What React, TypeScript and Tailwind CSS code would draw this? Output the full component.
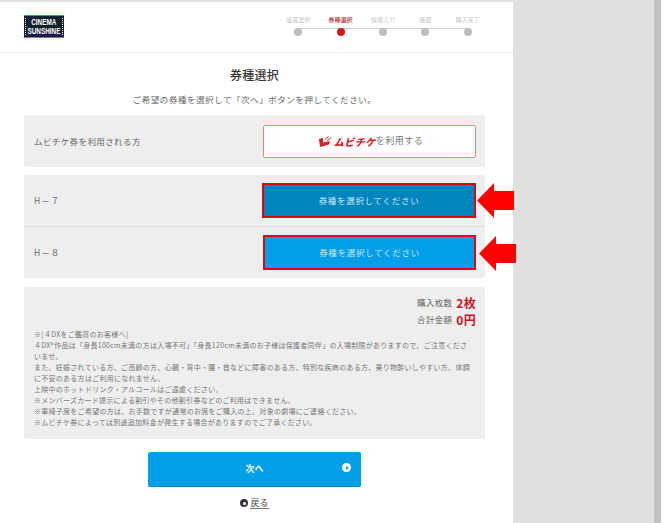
const font = { fontFamily: '"Noto Sans CJK JP", "Noto Sans", sans-serif' }

const steps = ['座席選択', '券種選択', '情報入力', '確認', '購入完了']

const notes = [
  '※[４DXをご鑑賞のお客様へ]',
  '４DX®作品は「身長100cm未満の方は入場不可」「身長120cm未満のお子様は保護者同伴」の入場制限がありますので、ご注意くださ',
  'いませ。',
  'また、妊娠されている方、ご高齢の方、心臓・背中・腰・首などに障害のある方、特別な疾病のある方、乗り物酔いしやすい方、体調',
  'に不安のある方はご利用になれません。',
  '上映中のホットドリンク・アルコールはご遠慮ください。',
  '※メンバーズカード提示による割引やその他割引券などのご利用はできません。',
  '※車椅子席をご希望の方は、お手数ですが通常のお席をご購入の上、対象の劇場にご連絡ください。',
  '※ムビチケ券によっては別途追加料金が発生する場合がありますのでご了承ください。',
]

function Logo() {
  return (
    <div className="relative flex h-[23px] w-[40px] flex-col items-center justify-center border-y border-[#1b9ad6] bg-[#10202e] font-['Liberation_Sans'] text-[8.5px] leading-[9px] font-bold text-white">
      <span className="scale-x-75">CINEMA</span>
      <span className="scale-x-75">SUNSHINE</span>
      <span className="absolute top-[2px] bottom-[2px] left-[1px] w-[1px] border-l border-dotted border-white" />
      <span className="absolute top-[2px] right-[1px] bottom-[2px] w-[1px] border-l border-dotted border-white" />
    </div>
  )
}

function Stepper() {
  return (
    <div className="flex w-[212px] justify-between">
      {steps.map((label, i) => (
        <div key={label} className="relative flex w-[42.5px] flex-col items-center">
          <span className={`text-[6px] leading-[9px] whitespace-nowrap ${i === 1 ? 'font-medium text-[#b03030]' : 'text-[#c4c4c4]'}`}>{label}</span>
          <span className={`relative z-10 mt-[4px] h-[8px] w-[8px] rounded-full ${i === 1 ? 'bg-[#cc1a1a]' : 'bg-[#bdbdbd]'}`} />
          {i < 4 && <span className="absolute top-[12.5px] left-1/2 h-[1px] w-[42.5px] bg-[#d0d0d0]" />}
        </div>
      ))}
    </div>
  )
}

function MubichikeMark() {
  return (
    <svg width="13" height="11" viewBox="0 0 13 11" className="mr-[2px]">
      <path d="M0 3 L4 2 L4 6.5 L11 5 L10 8.5 L1 11 Z" fill="#d9232a" />
      <path d="M6 3.5 L9.5 0.5 M8 4.5 L12.5 1.5" stroke="#d9232a" strokeWidth="1" fill="none" />
    </svg>
  )
}

function SelectButton({ dark, wide }: { dark?: boolean; wide?: boolean }) {
  return (
    <button className={`flex h-[35px] items-center justify-center border-2 border-[#e3000f] text-[8.5px] tracking-[0.7px] text-[#cfeaf8] ${wide ? 'w-[214px]' : 'w-[213px]'} ${dark ? 'bg-[#0085bd]' : 'bg-[#009fe8]'}`}>
      券種を選択してください
    </button>
  )
}

function Arrow() {
  return (
    <svg width="37" height="35" viewBox="0 0 37 35">
      <path d="M0 17.5 L17 0 L17 8 L37 8 L37 27 L17 27 L17 35 Z" fill="#ff0000" />
    </svg>
  )
}

export default function App() {
  return (
    <div className="flex h-[523px] w-[663px] overflow-hidden bg-[#e0e0de] text-[#333]" style={font}>
      <main className="relative h-[523px] w-[513px] bg-white">
        <div className="h-[2px] bg-[#e0e0de]" />
        <header className="flex h-[51px] items-start justify-between border-b border-[#f1f1f1] pt-[13px] pr-[24px] pl-[24px]">
          <Logo />
          <Stepper />
        </header>

        <div className="mr-[28px] ml-[24px]">
          <h1 className="mt-[13px] text-center text-[12px] leading-[18px] font-medium tracking-[0.3px] text-[#333]">券種選択</h1>
          <p className="mt-[9px] text-center text-[8.5px] leading-[12px] tracking-[0.55px] text-[#666]">ご希望の券種を選択して「次へ」ボタンを押してください。</p>

          <div className="mt-[10px] flex h-[52px] items-center justify-between rounded-[2px] bg-[#eeeeee] pr-[9px] pl-[10px]">
            <span className="text-[8.5px] tracking-[0.4px] text-[#666]">ムビチケ券を利用される方</span>
            <button className="flex h-[33px] w-[213px] items-center justify-center rounded-[2px] border border-[#e08a80] bg-white pl-[3px] text-[9px] tracking-[0.5px] text-[#777]">
              <MubichikeMark />
              <span className="text-[10px] font-black text-[#d9232a] italic">ムビチケ</span>
              <span>を利用する</span>
            </button>
          </div>

          <div className="mt-[8px] rounded-[2px] bg-[#eeeeee]">
            <div className="flex h-[52px] items-center justify-between border-b border-[#dcdcdc] pr-[9px] pl-[10px]">
              <span className="text-[8.5px] tracking-[1px] text-[#666]">H－７</span>
              <SelectButton dark wide />
            </div>
            <div className="flex h-[51px] items-center justify-between pr-[9px] pl-[10px]">
              <span className="text-[8.5px] tracking-[1px] text-[#666]">H－８</span>
              <SelectButton />
            </div>
          </div>

          <div className="mt-[9px] h-[152px] rounded-[2px] bg-[#eeeeee] pt-[7px] pr-[9px] pl-[10px]">
            <div className="flex h-[17px] items-center justify-end gap-[4px] text-[8.5px] tracking-[0.3px] text-[#666]">
              購入枚数 <span className="text-[12px] font-bold text-[#c8161d]">2枚</span>
            </div>
            <div className="flex h-[17px] items-center justify-end gap-[4px] text-[8.5px] tracking-[0.3px] text-[#666]">
              合計金額 <span className="text-[12px] font-bold text-[#c8161d]">0円</span>
            </div>
            <div className="mt-[1px] text-[7px] leading-[11px] text-[#777]">
              {notes.map(line => (
                <div key={line} className="tracking-[0.27px] whitespace-nowrap">{line}</div>
              ))}
            </div>
          </div>

          <button className="relative mx-auto mt-[13px] flex h-[35px] w-[213px] items-center justify-center rounded-[2px] border-b border-[#0085bd] bg-[#009fe8] text-[9px] font-bold text-white">
            次へ
            <span className="absolute top-[11px] right-[10px] flex h-[9px] w-[9px] items-center justify-center rounded-full bg-white">
              <span className="ml-[1px] h-0 w-0 border-y-[2px] border-l-[3px] border-y-transparent border-l-[#009fe8]" />
            </span>
          </button>

          <div className="mt-[10px] flex items-center justify-center gap-[2px] text-[9px] leading-[12px] text-[#444]">
            <span className="flex h-[8px] w-[8px] items-center justify-center rounded-full bg-[#333]">
              <span className="h-[3px] w-[3px] rounded-full bg-white" />
            </span>
            <span className="border-b border-[#777] leading-[11px]">戻る</span>
          </div>
        </div>

        {/* red arrows sit on top of the page */}
        <div className="absolute top-[183px] left-[477px]"><Arrow /></div>
        <div className="absolute top-[236px] left-[479px]"><Arrow /></div>
      </main>
      <div className="flex-1" />
      <div className="h-full w-[7px] bg-[#c3c3c3]" />
      <div className="h-full w-[2px] bg-white" />
    </div>
  )
}
